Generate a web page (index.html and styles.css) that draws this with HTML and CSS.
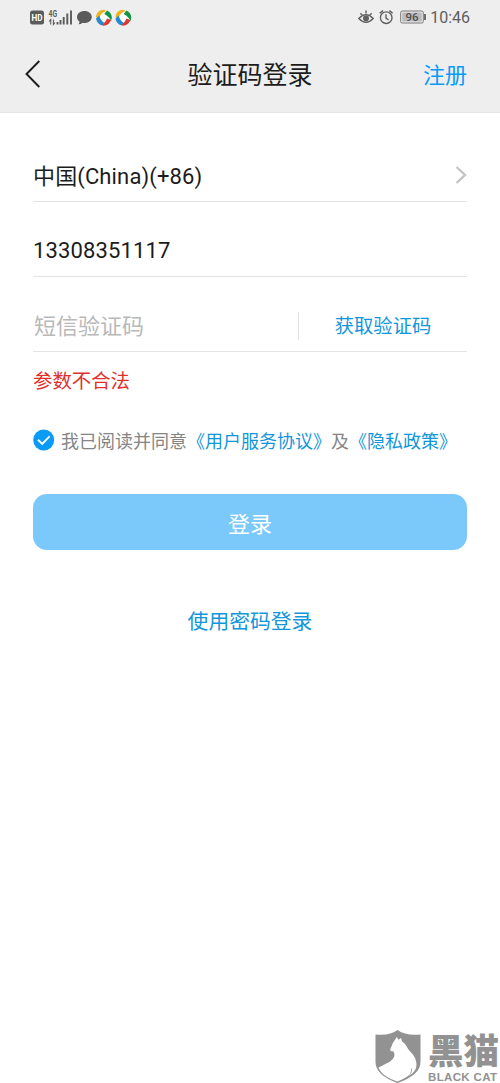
FILE: index.html
```html
<!DOCTYPE html>
<html lang="zh-CN">
<head>
<meta charset="utf-8">
<title>验证码登录</title>
<link rel="stylesheet" href="styles.css">
</head>
<body>
<div class="screen">
  <header class="header">
    <div class="status">
      <svg class="status-left" viewBox="0 0 106 20" width="106" height="20">
        <rect x="0" y="2.500" width="14" height="14" rx="2.500" fill="#5b5b5b"/>
        <text class="hd" x="1.500" y="13" textLength="11" lengthAdjust="spacingAndGlyphs">HD</text>
        <text class="net" x="18.500" y="8.500" textLength="8.500" lengthAdjust="spacingAndGlyphs">4G</text>
        <path d="M20.700 16.500v-5l-1.600 2M23.400 11.500v5l1.600-2" fill="none" stroke="#5b5b5b" stroke-width="1.100"/>
        <path d="M27.500 14V16.500M30.500 12V16.500M33.700 9V16.500M37.300 5.500V16.500M41 2.500V16.500" stroke="#5b5b5b" stroke-width="1.900"/>
        <path d="M54.500 3c4.200 0 7.300 2.600 7.300 6s-3.100 6-7.300 6q-1 0-2-.2-1.500 1.500-4 1.500 1.100-1.200 1-2.700C47.800 12.500 47 10.800 47 9c0-3.400 3.200-6 7.500-6Z" fill="#5b5b5b"/>
        <g id="ball">
          <circle cx="73.700" cy="9.500" r="7.800" fill="#fff"/>
          <path d="M66 8.500C66.500 4.500 69.500 1.500 74 1.700L76.500 3Q71.500 4.500 70 8L67 11.500Z" fill="#efb321"/>
          <path d="M77 2.500q4.600 2 4.900 7l-.8 3.700Q79.500 9 74.300 6.100Z" fill="#159447"/>
          <path d="M81 12c-1.200 3.500-4 5.700-7.500 5.700l-3.200-1.400q4.700-.3 6.700-5.800Z" fill="#db3831"/>
          <path d="M66 10.500 69.500 7.500q.5 4.500 4.600 7.300l-2 2.700Q67 16 66 10.500Z" fill="#258bd0"/>
        </g>
        <use href="#ball" x="19.400"/>
      </svg>
      <div class="status-right">
        <svg viewBox="0 0 68 20" width="68" height="20">
          <g fill="none" stroke="#606060" stroke-width="1.400">
            <path d="M.8 10.500Q8 2.800 15.200 10.500 8 18 .8 10.500ZM2.300 5.200l2 2M8 2.500v3M13.700 5.200l-2 2"/>
            <circle cx="28.200" cy="9.700" r="5.800"/>
            <path d="M28 6.200v4l2.600 1.600M21.700 5.300l3.300-2.700M34.700 5.300l-3.300-2.700"/>
          </g>
          <circle cx="8" cy="10.200" r="3" fill="#606060"/>
          <rect x="42.700" y="3" width="22.600" height="12" rx="1.500" fill="#eee" stroke="#777"/>
          <rect x="44.200" y="4.500" width="19.600" height="9" fill="#bbb"/>
          <path d="M67 6v6" stroke="#606060" stroke-width="1.800"/>
          <text class="battery" x="54" y="13" text-anchor="middle">96</text>
        </svg>
        <span class="time">10:46</span>
      </div>
    </div>
    <nav class="nav">
      <svg class="back" viewBox="0 0 16 28" width="16" height="28"><path d="M14.300 1 1.500 14 14.300 27" fill="none" stroke="#1b1b1b" stroke-width="1.900"/></svg>
      <h1 class="title">验证码登录</h1>
      <a class="register">注册</a>
    </nav>
  </header>
  <main class="form">
    <div class="row country"><span>中国(China)(+86)</span>
      <svg viewBox="0 0 12 20" width="12" height="20"><path d="M1.500 3 10 11 1.500 19" fill="none" stroke="#c4c4c4" stroke-width="2.400"/></svg>
    </div>
    <div class="row phone">13308351117</div>
    <div class="row code"><span class="placeholder">短信验证码</span><span class="get-code">获取验证码</span></div>
    <p class="error">参数不合法</p>
    <div class="agreement">
      <svg viewBox="0 0 22 22" width="22" height="22"><circle cx="10.700" cy="11" r="10.500" fill="#099bf5"/><path d="m5 10.800 4.200 4.100 7.400-7.500" fill="none" stroke="#fff" stroke-width="1.900"/></svg>
      <span>我已阅读并同意<a>《用户服务协议》</a>及<a>《隐私政策》</a></span>
    </div>
    <button class="login">登录</button>
    <a class="password-login">使用密码登录</a>
  </main>
  <footer class="brand">
    <svg viewBox="0 0 46 54" width="46" height="54">
      <path d="M.5 5.500Q15 7 22.500 1 30 7 45.500 5.500V33Q45.500 46 22.500 54 .5 46 .5 33Z" fill="#929292"/>
      <path d="M19.500 11.500 21.800 8l1.700 2.800L26 9l1 3.500c3.600 2 4.800 5.500 6.800 8.500 4.500 4.500 7.700 8.800 7.700 14.500 0 5-3 8.500-7 11l-7.500 4-4.500 2C13 49.500 6 45 3.500 38.500c5.500-3 12-5 15-9.500 1.500-2.500 1-4.500-.2-6.700-1.500.2-2.800 0-3.100-1.300l.5-2c1.500-2.500 1.500-5 3.800-7.500Z" fill="#fff"/>
      <path d="M31.500 48.500c3.500-2.300 5.500-5.500 5-9" fill="none" stroke="#929292" stroke-width=".8"/>
    </svg>
    <div class="brand-copy"><span class="brand-name">黑猫</span><span class="brand-en">BLACK CAT</span></div>
  </footer>
</div>
</body>
</html>
```

FILE: styles.css
```css
* { box-sizing: border-box; }
body { margin: 0; background: #fff; }
.screen {
  width: 500px;
  height: 1083px;
  overflow: hidden;
  display: flex;
  flex-direction: column;
  font-family: Roboto, "Noto Sans CJK SC", sans-serif;
  color: #1c1c1c;
}
.header { height: 113px; background: #eee; border-bottom: 1px solid #e6e6e6; }
.status { height: 36px; padding: 8px 30px 0; display: flex; justify-content: space-between; }
.status-right { display: flex; gap: 4px; }
.time { font-size: 16px; line-height: 20px; color: #606060; }
.hd { font: bold 9.500px Roboto, sans-serif; fill: #fff; }
.net { font: bold 9px Roboto, sans-serif; fill: #5b5b5b; }
.battery { font: 500 11.500px Roboto, sans-serif; fill: #505050; }
.nav {
  height: 76px;
  padding: 0 33px 0 25px;
  display: grid;
  grid-template-columns: 100px 1fr 92px;
  align-items: center;
}
.title { margin: 0; padding-top: 4px; font-size: 25px; font-weight: 400; line-height: 36px; text-align: center; }
.register { padding-top: 3px; font-size: 22px; line-height: 36px; text-align: right; color: #099bf5; }
.form { flex: 1; padding: 14px 33px 0; display: flex; flex-direction: column; }
.row {
  height: 75px;
  padding-top: 23px;
  border-bottom: 1px solid #e4e4e4;
  display: flex;
  align-items: center;
  justify-content: space-between;
  font-size: 22px;
}
.country { padding-top: 20px; letter-spacing: .13px; }
.phone { letter-spacing: .13px; }
.code { padding-top: 20px; }
.placeholder { padding-left: 1px; color: #b9b9b9; }
.get-code {
  width: 169px;
  height: 28px;
  margin-top: 3px;
  border-left: 1px solid #e2e2e2;
  font-size: 19.300px;
  line-height: 30px;
  text-align: center;
  color: #1296db;
}
.error { margin: 16px 0 0; font-size: 19.400px; line-height: 28px; color: #df302e; }
.agreement {
  height: 28px;
  margin-top: 30px;
  display: flex;
  align-items: center;
  gap: 6px;
  font-size: 18px;
  white-space: nowrap;
  color: #858585;
}
.agreement a { color: #1296db; }
.login {
  height: 56px;
  margin-top: 40px;
  flex-shrink: 0;
  padding: 0;
  border: 0;
  border-radius: 14px;
  background: #7bc8fa;
  color: #fff;
  font-family: inherit;
  font-size: 22px;
  font-weight: 400;
}
.password-login { margin-top: 57px; font-size: 20.800px; line-height: 30px; text-align: center; color: #1296db; }
.brand { height: 54px; padding-left: 375px; display: flex; gap: 7px; color: #929292; }
.brand-copy { display: flex; flex-direction: column; }
.brand-name { height: 42px; padding-top: 2px; font-size: 35.500px; font-weight: 900; line-height: 42px; white-space: nowrap; }
.brand-en { font: bold 11.500px/12px "Liberation Sans", sans-serif; letter-spacing: .35px; white-space: nowrap; }
```
